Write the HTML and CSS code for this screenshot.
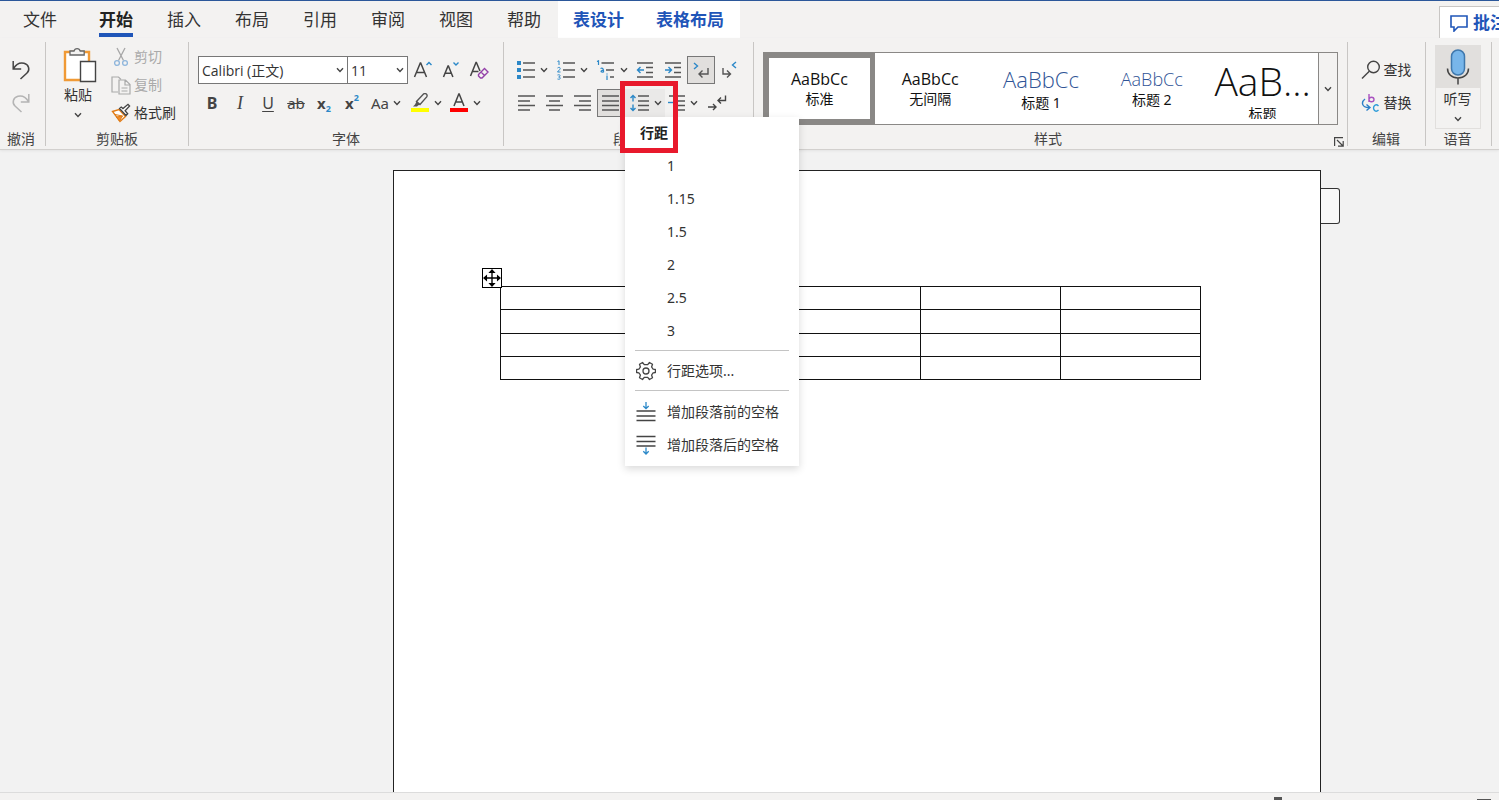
FILE: index.html
```html
<!DOCTYPE html>
<html lang="zh-CN">
<head>
<meta charset="utf-8">
<title>文档</title>
<link rel="stylesheet" href="styles.css">
</head>
<body>
<svg class="sprite" aria-hidden="true">
  <symbol id="chev" viewBox="0 0 8 8"><path d="M1 2.2 4 5.4 7 2.2" fill="none" stroke="#444" stroke-width="1.4"/></symbol>
</svg>
<div class="app">
  <nav class="tabs">
    <button class="tab tab-file">文件</button>
    <button class="tab active">开始</button>
    <button class="tab">插入</button>
    <button class="tab">布局</button>
    <button class="tab">引用</button>
    <button class="tab">审阅</button>
    <button class="tab">视图</button>
    <button class="tab">帮助</button>
    <div class="context-tabs">
      <button class="tab">表设计</button>
      <button class="tab">表格布局</button>
    </div>
    <button class="comments">
      <svg width="18" height="18" viewBox="0 0 18 18" fill="none" stroke="#1f55b8" stroke-width="1.6"><path d="M1 2h16v11H8l-4 4v-4H1z"/></svg>
      批注
    </button>
  </nav>

  <div class="ribbon">
    <section class="group undo">
      <div class="body rows">
        <button class="btn" aria-label="撤消"><svg width="20" height="22" viewBox="0 0 20 22" fill="none" stroke="#444" stroke-width="1.5"><path d="M2.2 2v8h8M2.5 9.5C5 5.500 9 3.300 13 4.300c5 1.200 6.200 6.700 3 9.700L9.500 20"/></svg></button>
        <button class="btn" aria-label="恢复"><svg width="20" height="22" viewBox="0 0 20 22" fill="none" stroke="#b4b4b4" stroke-width="1.5"><path d="M17.800 2v8h-8M17.500 9.500C15 5.500 11 3.300 7 4.300 2 5.500.8 11 4 14l6.500 6"/></svg></button>
      </div>
      <div class="label">撤消</div>
    </section>
    <span class="divider"></span>

    <section class="group clipboard">
      <div class="body">
        <button class="paste">
          <svg class="paste-icon" width="34" height="36" viewBox="0 0 34 36" fill="none"><path d="M2 5h24v28H2z" fill="#fff" stroke="#f09a36" stroke-width="2.400"/><path d="M7 8V4h4a3.200 3.200 0 0 1 6.200 0h4v4z" fill="#f3f2f1" stroke="#666" stroke-width="1.300"/><path d="M17.500 14.500h15v20h-15z" fill="#fff" stroke="#444" stroke-width="1.400"/></svg>
          <span>粘贴</span>
          <svg class="chev"><use href="#chev"/></svg>
        </button>
        <div class="clip-list">
          <button class="item off"><svg width="20" height="20" viewBox="0 0 20 20" fill="none"><path d="M6 1l6.500 12.500M14 1 7.500 13.500" stroke="#a6a6a6" stroke-width="1.300"/><circle cx="6" cy="16" r="2.400" stroke="#8fb6dc" stroke-width="1.300"/><circle cx="14" cy="16" r="2.400" stroke="#8fb6dc" stroke-width="1.300"/></svg>剪切</button>
          <button class="item off"><svg width="20" height="20" viewBox="0 0 20 20" fill="none" stroke="#aaa" stroke-width="1.200"><path d="M7 17H1V2h6.500L10 4.500"/><path d="M8 5h6.500L19 9.500V19H8zM14 5v5h5M10.500 13h6M10.500 16h6"/></svg>复制</button>
          <button class="item"><svg width="20" height="20" viewBox="0 0 20 20" fill="none"><path d="M1.500 8.500 8 6.500l6.500 7-5.500 5z" fill="#fff" stroke="#e07b16" stroke-width="1.400"/><path d="M4 11.500l7.500 1.500M5.500 14l6-1-3 5z" fill="#f08c2a" stroke="#e07b16"/><path d="M8.500 5.500l6.500 7 1.700-1.700-2.600-3L18.600 3 17 1.300 12 5.600 10.200 4z" fill="#fff" stroke="#444" stroke-width="1.300"/></svg>格式刷</button>
        </div>
      </div>
      <div class="label">剪贴板</div>
    </section>
    <span class="divider"></span>

    <section class="group font">
      <div class="body rows">
        <div class="row">
          <label class="combo combo-font"><select aria-label="字体"><option>Calibri (正文)</option></select><svg class="chev"><use href="#chev"/></svg></label>
          <label class="combo combo-size"><select aria-label="字号"><option>11</option></select><svg class="chev"><use href="#chev"/></svg></label>
          <button class="btn" aria-label="增大字号"><svg width="20" height="20" viewBox="0 0 20 20" fill="none"><path d="M1.500 17 7.300 3h.4l5.800 14M3.500 12.500h8" stroke="#444" stroke-width="1.500"/><path d="M13.500 5l2.500-2.600L18.500 5" stroke="#2b88c8" stroke-width="1.400"/></svg></button>
          <button class="btn" aria-label="减小字号"><svg width="20" height="20" viewBox="0 0 20 20" fill="none"><path d="M2.500 17 7 6h.4l4.500 11M4 13.300h6.500" stroke="#444" stroke-width="1.500"/><path d="M12.500 2.500 15 5l2.500-2.500" stroke="#2b88c8" stroke-width="1.400"/></svg></button>
          <button class="btn" aria-label="清除格式"><svg width="20" height="20" viewBox="0 0 20 20" fill="none"><path d="M1.500 16 7 2.500h.4L11 11M3.500 11.500h6" stroke="#444" stroke-width="1.500"/><path d="M9.500 14.500l6-6 3.500 3.500-6 6h-1.500l-2-2zM12 12l3.500 3.500" stroke="#9340a8" stroke-width="1.400"/></svg></button>
        </div>
        <div class="row">
          <button class="btn glyph bold">B</button>
          <button class="btn glyph italic">I</button>
          <button class="btn glyph under">U</button>
          <button class="btn glyph strike">ab</button>
          <button class="btn glyph script">x<sub>2</sub></button>
          <button class="btn glyph script">x<sup>2</sup></button>
          <button class="btn split glyph">Aa<svg class="chev"><use href="#chev"/></svg></button>
          <button class="btn split tight" aria-label="突出显示"><svg width="20" height="20" viewBox="0 0 20 20" fill="none"><path d="M1 15h18v4H1z" fill="#ff0"/><path d="M6.500 8.500 13.500 1c2-1.500 4.500.8 3.200 2.900L10 11.500l-3.500-3z" stroke="#555" stroke-width="1.400"/><path d="M6.500 8.500 5 11.500 3 13.500h4l1-1 2-1z" fill="#555"/></svg><svg class="chev"><use href="#chev"/></svg></button>
          <button class="btn split tight" aria-label="字体颜色"><svg width="20" height="20" viewBox="0 0 20 20" fill="none"><path d="M1 15h18v4H1z" fill="#f00"/><path d="M5 13 9.800 1h.4L15 13M6.700 9h6.600" stroke="#444" stroke-width="1.500"/></svg><svg class="chev"><use href="#chev"/></svg></button>
        </div>
      </div>
      <div class="label">字体</div>
    </section>
    <span class="divider"></span>

    <section class="group para">
      <div class="body rows">
        <div class="row">
          <button class="btn split" aria-label="项目符号"><svg width="20" height="20" viewBox="0 0 20 20"><path d="M1 1h4v4H1zM1 8h4v4H1zM1 15h4v4H1z" fill="#2b88c8"/><path d="M7 3h12M7 10h12M7 17h12" stroke="#555" stroke-width="1.500"/></svg><svg class="chev"><use href="#chev"/></svg></button>
          <button class="btn split" aria-label="编号"><svg width="20" height="20" viewBox="0 0 20 20" fill="none"><path d="M1.500 1.500 3 .8V5M1.500 8c2-1.500 3.500 0 2.200 1.500L1.500 12H4.500M1.500 15c3-1 3.500 1.500 1.200 2 2.800.3 1.800 3-1.200 2" stroke="#2b88c8"/><path d="M7 3h12M7 10h12M7 17h12" stroke="#555" stroke-width="1.500"/></svg><svg class="chev"><use href="#chev"/></svg></button>
          <button class="btn split" aria-label="多级列表"><svg width="20" height="20" viewBox="0 0 20 20" fill="none"><path d="M1 1.500 2.500.8V5M4.500 8.500c2-1 3.300 0 3 3.500-3 .5-3.500-1.500 0-1.800M11 13.500v1M11 15.500V20" stroke="#2b88c8" stroke-width="1.200"/><path d="M5.500 3H18M10 10h8M14 17h4" stroke="#555" stroke-width="1.500"/></svg><svg class="chev"><use href="#chev"/></svg></button>
          <button class="btn" aria-label="减少缩进"><svg width="18" height="18" viewBox="0 0 18 18" fill="none"><path d="M1 2h16M10 6.500h7M10 11.500h7M1 16h16" stroke="#555" stroke-width="1.500"/><path d="M8 9H1.500M4.500 6 1.500 9l3 3" stroke="#2b88c8" stroke-width="1.400"/></svg></button>
          <button class="btn" aria-label="增加缩进"><svg width="18" height="18" viewBox="0 0 18 18" fill="none"><path d="M1 2h16M10 6.500h7M10 11.500h7M1 16h16" stroke="#555" stroke-width="1.500"/><path d="M1 9h6.500M4.500 6l3 3-3 3" stroke="#2b88c8" stroke-width="1.400"/></svg></button>
          <button class="btn pressed" aria-label="从左到右"><svg width="18" height="18" viewBox="0 0 18 18" fill="none"><path d="M2 2l3.500 3L2 8" stroke="#2b88c8" stroke-width="1.400"/><path d="M16 7v6H7M10.500 9.500 7 13l3.500 3.500" stroke="#555" stroke-width="1.400"/></svg></button>
          <button class="btn" aria-label="从右到左"><svg width="18" height="18" viewBox="0 0 18 18" fill="none"><path d="M16 1l-3.500 3L16 7" stroke="#2b88c8" stroke-width="1.400"/><path d="M3 7v6h7.500M7 9.500l3.500 3.500L7 16.500" stroke="#555" stroke-width="1.400"/></svg></button>
        </div>
        <div class="row row-align">
          <button class="btn" aria-label="左对齐"><svg width="18" height="18" viewBox="0 0 18 18"><path d="M0 2h17M0 7h12M0 11.500h17M0 16h12" stroke="#555" stroke-width="1.500"/></svg></button>
          <button class="btn" aria-label="居中"><svg width="18" height="18" viewBox="0 0 18 18"><path d="M0 2h17M3 7h11M0 11.500h17M3 16h11" stroke="#555" stroke-width="1.500"/></svg></button>
          <button class="btn" aria-label="右对齐"><svg width="18" height="18" viewBox="0 0 18 18"><path d="M0 2h17M5 7h12M0 11.500h17M5 16h12" stroke="#555" stroke-width="1.500"/></svg></button>
          <button class="btn pressed" aria-label="两端对齐"><svg width="18" height="18" viewBox="0 0 18 18"><path d="M0 2h17M0 7h17M0 11.500h17M0 16h17" stroke="#555" stroke-width="1.500"/></svg></button>
          <div class="spacing">
            <button class="btn split open" aria-label="行距"><svg width="20" height="18" viewBox="0 0 20 18" fill="none"><path d="M8 2h11M8 7h11M8 11.500h11M8 16h11" stroke="#555" stroke-width="1.500"/><path d="M3 1.500v6M.5 4 3 1.500 5.500 4M3 10.500v6M.5 14 3 16.500 5.500 14" stroke="#2b88c8" stroke-width="1.400"/></svg><svg class="chev"><use href="#chev"/></svg></button>
            <div class="menu" role="menu">
              <div class="menu-title">行距</div>
              <button class="menu-item"><span class="ico"></span>1</button>
              <button class="menu-item"><span class="ico"></span>1.15</button>
              <button class="menu-item"><span class="ico"></span>1.5</button>
              <button class="menu-item"><span class="ico"></span>2</button>
              <button class="menu-item"><span class="ico"></span>2.5</button>
              <button class="menu-item"><span class="ico"></span>3</button>
              <hr>
              <button class="menu-item"><span class="ico"><svg width="20" height="20" viewBox="0 0 20 20" fill="none" stroke="#444" stroke-width="1.300" stroke-linejoin="round"><circle cx="10" cy="10" r="3"/><path d="M6.500 1.500 8.300 3.700h3.400l1.800-2.200 3 1.700-.9 2.800 1.500 2.200 2.300.3v3l-2.300.3-1.500 2.200.9 2.800-3 1.700-1.800-2.200H8.300l-1.800 2.200-3-1.700.9-2.800-1.500-2.200-2.300-.3v-3l2.300-.3L4.400 6l-.9-2.800z"/></svg></span>行距选项...</button>
              <hr class="last">
              <button class="menu-item"><span class="ico"><svg width="20" height="20" viewBox="0 0 20 20" fill="none"><path d="M.5 9h19M.5 14h19M.5 18.500h19" stroke="#444" stroke-width="1.500"/><path d="M10 0v6.500M7.300 4l2.700 2.700L12.700 4" stroke="#2b88c8" stroke-width="1.300"/></svg></span>增加段落前的空格</button>
              <button class="menu-item"><span class="ico"><svg width="20" height="20" viewBox="0 0 20 20" fill="none"><path d="M.5 1.500h19M.5 6.500h19M.5 11h19" stroke="#444" stroke-width="1.500"/><path d="M10 12.500V19M7.300 16.300 10 19l2.700-2.700" stroke="#2b88c8" stroke-width="1.300"/></svg></span>增加段落后的空格</button>
            </div>
            <div class="highlight"></div>
          </div>
          <button class="btn split special" aria-label="特殊缩进"><svg width="18" height="18" viewBox="0 0 18 18" fill="none"><path d="M1 2h16M8 7h9M8 11.500h9M8 16h9" stroke="#555" stroke-width="1.500"/><path d="M0 8.500h5" stroke="#2b88c8" stroke-width="1.400"/></svg><svg class="chev"><use href="#chev"/></svg></button>
          <button class="btn" aria-label="显示标记"><svg width="20" height="18" viewBox="0 0 20 18" fill="none" stroke="#444" stroke-width="1.400"><path d="M18.500 1.500v5H11M14 3.500l-3 3 3 3M1 13h8M6 10l3 3-3 3"/></svg></button>
        </div>
      </div>
      <div class="label">段落</div>
    </section>
    <span class="divider"></span>

    <section class="group styles">
      <div class="body">
        <div class="gallery">
          <button class="style chosen"><span class="sample">AaBbCc</span><span>标准</span></button>
          <button class="style"><span class="sample">AaBbCc</span><span>无间隔</span></button>
          <button class="style"><span class="sample h1">AaBbCc</span><span>标题 1</span></button>
          <button class="style"><span class="sample h2">AaBbCc</span><span>标题 2</span></button>
          <button class="style tall"><span class="sample title">AaB...</span><span>标题</span></button>
          <button class="more" aria-label="更多样式"><svg class="chev"><use href="#chev"/></svg></button>
        </div>
      </div>
      <div class="label">样式</div>
      <button class="launcher" aria-label="样式窗格"><svg width="10" height="10" viewBox="0 0 10 10" fill="none" stroke="#444" stroke-width="1.200"><path d="M.6 9V.6H9M3 3l6 6M9.200 4v5.200H4"/></svg></button>
    </section>
    <span class="divider"></span>

    <section class="group edit">
      <div class="body rows">
        <button class="item"><svg width="20" height="20" viewBox="0 0 20 20" fill="none" stroke="#444" stroke-width="1.400"><circle cx="12.500" cy="7" r="5.800"/><path d="M8.300 11.200 1 18.500"/></svg>查找</button>
        <button class="item"><svg width="20" height="20" viewBox="0 0 20 20" fill="none" stroke-width="1.400"><path d="M8 1v8M8 6.500c0-3 5-3 5 0s-5 3-5 0" stroke="#a852c0"/><path d="M17.500 13c-2.500-2.500-5-.5-5 2s2.500 4.500 5 2" stroke="#2b9bd8"/><path d="M4 6c-4 3-3.500 8.500 4 8.500M5.500 11.500 9 14.500l-3.500 3" stroke="#2b7fc8"/></svg>替换</button>
      </div>
      <div class="label">编辑</div>
    </section>
    <span class="divider"></span>

    <section class="group voice">
      <div class="body">
        <button class="dictate">
          <span class="mic"><svg width="24" height="36" viewBox="0 0 24 36" fill="none" stroke="#444" stroke-width="1.500"><rect x="5.500" y="1" width="13" height="25" rx="6.500" fill="#78b6ea" stroke="#3f78ad"/><path d="M1.500 19.500c0 5.500 4 9.500 10.500 9.500s10.500-4 10.500-9.500M12 29v6.500"/></svg></span>
          <span>听写</span>
          <svg class="chev"><use href="#chev"/></svg>
        </button>
      </div>
      <div class="label">语音</div>
    </section>
    <span class="divider"></span>
    <span class="ribbon-end"></span>
  </div>

  <main class="workspace">
    <article class="page">
      <div class="table-wrap">
        <button class="handle" aria-label="移动表格"><svg width="20" height="20" viewBox="0 0 20 20"><path d="M10 2v16M2 10h16" stroke="#000" stroke-width="1.500"/><path d="M10 0 14 4.500H6zM10 20 14 15.500H6zM0 10 4.500 6v8zM20 10 15.500 6v8z"/></svg></button>
        <table>
          <tr><td></td><td></td><td></td><td></td><td></td></tr>
          <tr><td></td><td></td><td></td><td></td><td></td></tr>
          <tr><td></td><td></td><td></td><td></td><td></td></tr>
          <tr><td></td><td></td><td></td><td></td><td></td></tr>
        </table>
      </div>
    </article>
    <div class="page-tag"></div>
  </main>
  <footer class="status"><span class="thumb"></span><span class="fit"></span></footer>
</div>
</body>
</html>
```
FILE: styles.css
```css
* { box-sizing: border-box; }

body {
  margin: 0;
  font: 14px/20px "Noto Sans", "Noto Sans CJK SC", sans-serif;
  color: #333;
}

button {
  margin: 0;
  padding: 0;
  border: 0;
  background: none;
  font: inherit;
  color: inherit;
  white-space: nowrap;
}

svg { display: block; flex: none; }
.sprite { position: absolute; width: 0; height: 0; }
.chev { width: 8px; height: 8px; }

.app {
  display: flex;
  flex-direction: column;
  height: 100vh;
  overflow: hidden;
  background: #f2f2f2;
}

/* Tabs */
.tabs {
  display: flex;
  height: 38px;
  padding-left: 6px;
  border-top: 1px solid #2b579a;
  background: #f3f2f1;
}
.tab {
  position: relative;
  padding: 0 17px;
  font-size: 17px;
}
.tab-file { margin-right: 8px; }
.tab.active { font-weight: 700; color: #222; }
.tab.active::after {
  content: "";
  position: absolute;
  left: 17px;
  right: 17px;
  bottom: 1px;
  height: 4px;
  background: #1f55b8;
}
.context-tabs { display: flex; background: #fff; }
.context-tabs .tab { padding: 0 16px; font-weight: 700; color: #1f55b8; }
.context-tabs .tab:first-child { padding-left: 15px; }
.comments {
  display: flex;
  align-items: center;
  gap: 5px;
  height: 33px;
  margin: 5px -17px 0 auto;
  padding: 0 8px 0 10px;
  border: 1px solid #c8c6c4;
  background: #fff;
  font-size: 17px;
  font-weight: 700;
  color: #1f55b8;
}

/* Ribbon */
.ribbon {
  display: flex;
  height: 112px;
  padding-top: 4px;
  border-bottom: 1px solid #d2d0ce;
  background: #f3f2f1;
  box-shadow: 0 1px 2px #e4e4e4;
}
.divider { width: 1px; height: 104px; background: #c8c6c4; }
.group { position: relative; display: flex; flex-direction: column; }
.body { display: flex; height: 89px; }
.rows { flex-direction: column; gap: 5px; padding-top: 14px; }
.row { display: flex; }
.label { text-align: center; color: #444; }

.btn {
  display: flex;
  align-items: center;
  justify-content: center;
  width: 28px;
  height: 28px;
}
.btn.pressed { border: 1px solid #777; background: #e1dfdd; }
.btn.split { width: 40px; justify-content: flex-start; gap: 4px; padding-left: 5px; }
.btn.tight { width: 39px; padding-left: 4px; }
.item { display: flex; align-items: center; gap: 3px; height: 28px; }
.off { color: #aaa; }

.undo { width: 45px; padding-right: 3px; }
.undo .body { align-items: center; }

.clipboard { width: 142px; }
.paste {
  display: flex;
  flex-direction: column;
  align-items: center;
  width: 64px;
  padding-top: 5px;
}
.paste-icon { margin-left: 4px; }
.paste span { padding-top: 2px; }
.paste .chev { margin-top: 6px; }
.clip-list { padding: 1px 0 0 1px; }

.font { width: 314px; padding-left: 9px; }
.font .label { padding-right: 9px; }
.combo {
  position: relative;
  display: flex;
  align-items: center;
  height: 28px;
  border: 1px solid #777;
  background: #fff;
}
.combo-font { width: 150px; }
.combo-size { width: 61px; margin-left: -1px; }
.combo select {
  width: 100%;
  height: 100%;
  padding: 0 3px;
  border: 0;
  background: none;
  appearance: none;
  font: 14px "Open Sans", "Noto Sans CJK SC", sans-serif;
  color: #333;
}
.combo .chev { position: absolute; right: 3px; }
.combo-size + .btn { margin-left: 1px; }
.glyph { font-size: 15px; color: #444; }
.bold { font-size: 16px; font-weight: 700; }
.italic { font-family: "Liberation Serif", serif; font-style: italic; font-size: 18px; }
.under { font-size: 16px; text-decoration: underline; text-underline-offset: 2px; }
.strike { text-decoration: line-through; }
.script { font-weight: 700; }
.script sub, .script sup { font-size: 9px; line-height: 9px; color: #2b88c8; }
.script sub { padding-top: 10px; }
.script sup { padding-bottom: 12px; }

.para { width: 249px; padding-left: 7px; }
.para .label { padding-right: 10px; }
.row-align { padding-left: 2px; }
.special.split { width: 38px; padding-left: 3px; }
.open { background: #eae9e8; }
.spacing { position: relative; z-index: 2; }

/* Line spacing menu */
.menu {
  position: absolute;
  top: 100%;
  left: 0;
  width: 174px;
  padding-bottom: 5px;
  background: #fff;
  box-shadow: 0 3px 8px rgba(0, 0, 0, 0.15);
}
.menu-title { padding-left: 15px; line-height: 32px; font-weight: 700; color: #222; }
.menu-item {
  display: flex;
  align-items: center;
  gap: 11px;
  width: 100%;
  height: 33px;
  padding-left: 11px;
}
.ico { width: 20px; }
.menu hr { height: 1px; margin: 3px 10px; border: 0; background: #c4c4c4; }
.menu .last { margin-bottom: 4px; }
.highlight {
  position: absolute;
  top: -8px;
  left: -5px;
  width: 58px;
  height: 72px;
  border: 5px solid #e8192c;
  pointer-events: none;
}

/* Styles gallery */
.styles { flex: 1; padding: 0 9px; }
.styles .label { padding-right: 5px; }
.gallery {
  display: flex;
  flex: 1;
  height: 73px;
  margin-top: 10px;
  border: 1px solid #8a8886;
  background: #fff;
}
.style {
  display: flex;
  flex: 1 1 20px;
  flex-direction: column;
  align-items: center;
  justify-content: center;
  min-width: 0;
  overflow: hidden;
  border: 5px solid transparent;
  color: #111;
}
.style.chosen { border-color: #8a8886; }
.style.tall { justify-content: flex-start; }
.sample { font-family: "Open Sans", sans-serif; font-size: 16px; }
.h1, .h2, .title { font-weight: 300; }
.h1 { font-size: 22px; line-height: 28px; color: #2f5496; }
.h2 { font-size: 18px; line-height: 22px; color: #2f5496; }
.title { font-size: 39px; line-height: 46px; }
.more {
  display: flex;
  align-items: center;
  justify-content: center;
  width: 19px;
  border-left: 1px solid #8a8886;
  background: #f3f2f1;
}
.launcher { position: absolute; right: 3px; bottom: 2px; }

.edit { width: 77px; padding-right: 1px; }
.edit .body { align-items: center; }

.voice { width: 65px; padding-right: 2px; }
.voice .body { justify-content: center; }
.dictate {
  display: flex;
  flex-direction: column;
  align-items: center;
  width: 46px;
  height: 84px;
  margin-top: 3px;
  border: 1px solid #e1dfdd;
}
.mic { display: flex; justify-content: center; width: 100%; padding: 3px 0; background: #e1dfdd; }
.mic + span { padding-top: 1px; }
.dictate .chev { margin-top: 6px; }
.ribbon-end { width: 7px; }

/* Document */
.workspace {
  display: flex;
  align-items: flex-start;
  flex: 1;
  min-height: 0;
  padding: 20px 159px 0 393px;
}
.page {
  flex: 1;
  align-self: stretch;
  padding: 115px 119px 0 106px;
  border: 1px solid #222;
  border-bottom: 0;
  background: #fff;
}
.page-tag {
  width: 19px;
  height: 36px;
  margin-top: 18px;
  border: 1px solid #333;
  border-left: 0;
  border-radius: 0 3px 3px 0;
  background: #f8f8f8;
}
.table-wrap { position: relative; }
table { width: 100%; height: 94px; table-layout: fixed; border-collapse: collapse; }
td { padding: 0; border: 1px solid #111; }
.handle {
  position: absolute;
  top: -18px;
  left: -18px;
  width: 20px;
  height: 20px;
  border: 1px solid #000;
  background: #fff;
}
.handle svg { width: 18px; height: 18px; }

.status {
  display: flex;
  align-items: flex-end;
  justify-content: flex-end;
  gap: 195px;
  height: 8px;
  padding-right: 8px;
  border-top: 1px solid #dcdcdc;
  background: #f3f2f1;
}
.thumb { width: 8px; height: 3px; background: #555; }
.fit { width: 14px; height: 1px; background: #555; }
```
